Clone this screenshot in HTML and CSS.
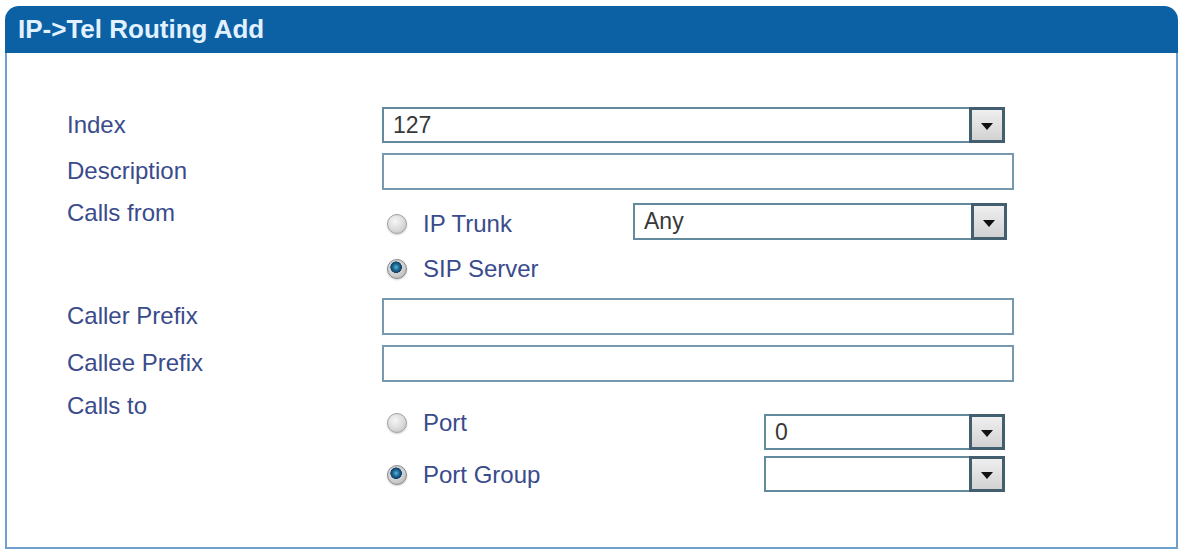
FILE: index.html
```html
<!DOCTYPE html>
<html lang="en">
<head>
  <meta charset="UTF-8" />
  <title>IP-&gt;Tel Routing Add</title>
  <link rel="stylesheet" href="styles.css">
</head>
<body>
<div class="panel">
  <div class="panel-head">IP-&gt;Tel Routing Add</div>
  <div class="panel-body">

    <div class="row">
      <div class="label">Index</div>
      <div class="select w-index"><span class="value">127</span><span class="drop"></span></div>
    </div>

    <div class="row">
      <div class="label">Description</div>
      <div class="text-input"></div>
    </div>

    <div class="row">
      <div class="label label-top">Calls from</div>
      <div class="choices choices-from">
        <div class="options">
          <label class="option"><span class="radio"></span>IP Trunk</label>
          <label class="option"><span class="radio checked"></span>SIP Server</label>
        </div>
        <div class="selects">
          <div class="select"><span class="value">Any</span><span class="drop"></span></div>
        </div>
      </div>
    </div>

    <div class="row">
      <div class="label">Caller Prefix</div>
      <div class="text-input"></div>
    </div>

    <div class="row">
      <div class="label">Callee Prefix</div>
      <div class="text-input"></div>
    </div>

    <div class="row">
      <div class="label label-top2">Calls to</div>
      <div class="choices choices-to">
        <div class="options">
          <label class="option"><span class="radio"></span>Port</label>
          <label class="option"><span class="radio checked"></span>Port Group</label>
        </div>
        <div class="selects">
          <div class="select"><span class="value">0</span><span class="drop"></span></div>
          <div class="select"><span class="value"></span><span class="drop"></span></div>
        </div>
      </div>
    </div>

  </div>
</div>
</body>
</html>
```

FILE: styles.css
```css
body {
  margin: 0;
  background: #fff;
  font-family: "Liberation Sans", Arial, sans-serif;
}
.panel {
  margin: 6px 0 0 5px;
  width: 1173px;
}
.panel-head {
  height: 47px;
  line-height: 47px;
  padding-left: 13px;
  background: #0b61a4;
  border-radius: 14px 14px 0 0;
  color: #e2f1ff;
  font-size: 26px;
  font-weight: bold;
}
.panel-body {
  height: 496px;
  border: 2px solid #6f9fcd;
  border-top: none;
  padding: 54px 0 0 60px;
  box-sizing: border-box;
}
.row {
  display: grid;
  grid-template-columns: 315px auto;
  margin-bottom: 10px;
  align-items: start;
}
.label {
  font-size: 24px;
  line-height: 36px;
  color: #3a4b8c;
}
.label-top {
  line-height: 26px;
}
.label-top2 {
  line-height: 28px;
}
.select,
.text-input {
  box-sizing: border-box;
  height: 36px;
  border: 2px solid #648a9e;
  background: #fff;
  display: flex;
}
.text-input {
  width: 632px;
  height: 37px;
  border-color: #7799ad;
}
.w-index {
  width: 623px;
}
.select .value {
  flex: 1;
  padding-left: 9px;
  font-size: 23px;
  line-height: 32px;
  color: #383838;
}
.select .drop {
  position: relative;
  width: 30px;
  margin: -2px -2px -2px 0;
  border: 3px solid #435f6f;
  background: linear-gradient(#efefef, #d2d2d2);
}
.select .drop::after {
  content: "";
  position: absolute;
  left: 50%;
  top: 50%;
  margin: -2px 0 0 -6px;
  border-left: 6px solid transparent;
  border-right: 6px solid transparent;
  border-top: 7px solid #111;
}
.choices {
  display: grid;
}
.choices-from {
  grid-template-columns: 251px 374px;
}
.choices-to {
  grid-template-columns: 382px 241px;
}
.options {
  display: flex;
  flex-direction: column;
  padding-left: 5px;
}
.choices-from .options {
  padding-top: 5px;
  gap: 7px;
}
.choices-to .options {
  padding-top: 12px;
  gap: 14px;
}
.option {
  display: flex;
  align-items: center;
  height: 38px;
  font-size: 24px;
  color: #3a4b8c;
}
.radio {
  box-sizing: border-box;
  width: 20px;
  height: 20px;
  margin-right: 16px;
  border-radius: 50%;
  border: 1px solid #a0a0a0;
  background: radial-gradient(circle at 40% 35%, #f6f6f6 0, #dadada 55%, #bcbcbc 100%);
  box-shadow: 0 1px 2px rgba(0, 0, 0, 0.2);
}
.radio.checked {
  border-color: #888;
  background:
    radial-gradient(circle at 45% 40%, #5fb4d8 0, #1d6c98 3px, #123f66 5.5px, transparent 6px),
    radial-gradient(circle at 40% 35%, #f0f0f0 0, #c4c4c4 70%, #989898 100%);
}
.selects {
  display: flex;
  flex-direction: column;
}
.choices-from .selects {
  padding-top: 3px;
}
.choices-from .select {
  height: 37px;
}
.choices-to .selects {
  padding-top: 22px;
  gap: 6px;
}
```
